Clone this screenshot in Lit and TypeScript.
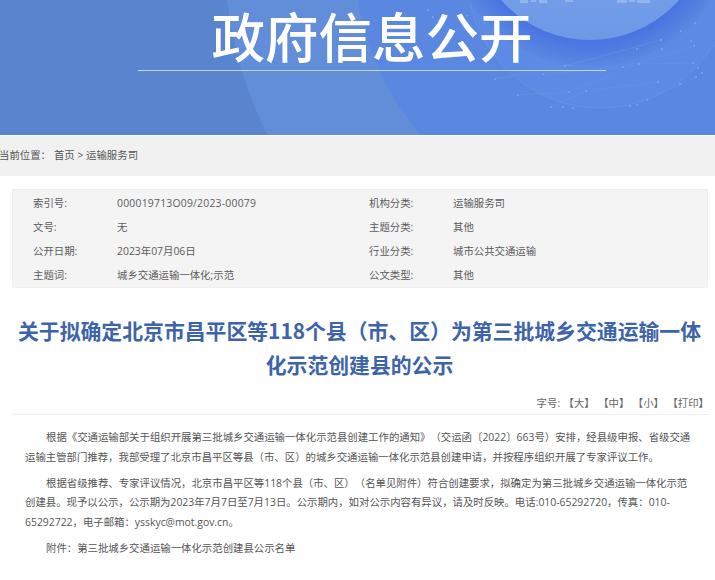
import { LitElement, html, css, svg } from "lit";
import { customElement } from "lit/decorators.js";

const rows: [string, string, string, string][] = [
  ["索引号:", "000019713O09/2023-00079", "机构分类:", "运输服务司"],
  ["文号:", "无", "主题分类:", "其他"],
  ["公开日期:", "2023年07月06日", "行业分类:", "城市公共交通运输"],
  ["主题词:", "城乡交通运输一体化;示范", "公文类型:", "其他"],
];

const dots: [number, number][] = [
  [695,23],[681,31],[661,40],[691,41],[694,46],[662,49],[637,49],[693,63],[698,68],[702,73],[696,77],
  [658,82],[680,84],[623,67],[639,64],[565,66],[543,74],[495,79],[569,92],[586,91],[518,95],[551,107],
  [563,107],[573,108],[630,106],[637,105],[647,100],[428,10],[433,17],[467,16],
];
const links: [number, number, number, number][] = [
  [495,79,565,66],[565,66,661,40],[543,74,623,67],[623,67,694,46],[569,92,639,64],[639,64,693,63],[586,91,658,82],[518,95,569,92],[551,107,586,91],[647,100,696,77],
];
const skyline: [number, number, number][] = [[520,8,3],[531,5,2],[539,8,3],[565,8,2],[617,10,3],[629,6,2],[637,13,3]];

@customElement("app-root")
export class AppRoot extends LitElement {
  static styles = css`
    :host { display: block; width: 715px; height: 580px; overflow: hidden; background: #fff;
      font-family: "Open Sans", "Noto Sans CJK SC", sans-serif; color: #555; text-spacing-trim: space-all; }
    .banner { position: relative; height: 135px; background: #5a84cd; display: flex; flex-direction: column; align-items: flex-start; }
    .deco { position: absolute; inset: 0; width: 100%; height: 100%; }
    .banner h1 { position: relative; margin: 6px 0 0 138px; height: 65px; width: 468px; box-sizing: border-box; border-bottom: 1px solid #c3d3f0;
      font: 500 53.5px/58px "Noto Sans CJK SC", sans-serif; color: #fff; text-align: center; white-space: nowrap; }
    .crumb { margin-top: 1px; height: 40px; background: #f1f1f1; font-size: 10.4px; line-height: 39px; color: #555; white-space: nowrap; text-indent: -1px; }
    .crumb span { margin-left: 3px; }
    .meta { margin: 13px 7px 0 12px; height: 99px; box-sizing: border-box; background: #f4f4f4; border: 1px solid #efefef; display: grid;
      grid-template-columns: 84px 252px 84px 1fr; grid-auto-rows: 24px; padding: 1px 0 0 20px; font-size: 10.4px; line-height: 24px; color: #5c5c5c; }
    .meta div:nth-child(2) { letter-spacing: 0.22px; }
    .title { margin: 25px 10px 0 14px; font: 700 20.85px/34px "Noto Sans CJK SC", sans-serif; color: #3d64a9; text-align: center; }
    .tools { margin: 13px 6px 0 12px; height: 20px; border-bottom: 1px solid #eee; text-align: right; font-size: 10.4px; line-height: 18px; color: #666; white-space: pre; word-spacing: 0.75px; }
    .body { margin: 13px 20px 0 25px; font-size: 10.4px; line-height: 19.5px; color: #555; }
    .body p { margin: 0 0 6.5px; text-indent: 21px; }
  `;

  render() {
    return html`
      <div class="banner">
        <svg class="deco" viewBox="0 0 715 135" aria-hidden="true">
          <defs>
            <radialGradient id="halo">
              <stop offset="0.82" stop-color="#4873e2"></stop>
              <stop offset="1" stop-color="#5a88e0"></stop>
            </radialGradient>
            <linearGradient id="moon" x1="0" y1="0" x2="0" y2="1">
              <stop offset="0.6" stop-color="#7ba4ea"></stop>
              <stop offset="1" stop-color="#6d98e6"></stop>
            </linearGradient>
          </defs>
          <circle cx="640" cy="-50" r="416" fill="#618dd9"></circle>
          <circle cx="620" cy="-40" r="265" fill="#5a88e0"></circle>
          <circle cx="600" cy="-25" r="133" fill="#5c8ae4"></circle>
          <circle cx="600" cy="-25" r="133" fill="none" stroke="#6b94e6" stroke-width="0.7"></circle>
          <circle cx="590" cy="-79" r="145" fill="url(#halo)"></circle>
          <circle cx="590" cy="-79" r="119" fill="url(#moon)"></circle>
          ${skyline.map(([x, w, h]) => svg`<rect x=${x} y="0" width=${w} height=${h} fill="#94b4ec"></rect>`)}
          ${links.map(([a, b, c, d]) => svg`<line x1=${a} y1=${b} x2=${c} y2=${d} stroke="#6b95e6" stroke-width="0.5"></line>`)}
          ${dots.map(([x, y]) => svg`<circle cx=${x} cy=${y} r="1.1" fill="#7fa2e8"></circle>`)}
        </svg>
        <h1>政府信息公开</h1>
      </div>
      <div class="crumb">当前位置：<span>首页 &gt; 运输服务司</span></div>
      <div class="meta">
        ${rows.map((r) => r.map((c) => html`<div>${c}</div>`))}
      </div>
      <div class="title">关于拟确定北京市昌平区等118个县（市、区）为第三批城乡交通运输一体化示范创建县的公示</div>
      <div class="tools">字号: 【大】 【中】 【小】 【打印】</div>
      <div class="body">
        <p>根据《交通运输部关于组织开展第三批城乡交通运输一体化示范县创建工作的通知》（交运函〔2022〕663号）安排，经县级申报、省级交通运输主管部门推荐，我部受理了北京市昌平区等县（市、区）的城乡交通运输一体化示范县创建申请，并按程序组织开展了专家评议工作。</p>
        <p>根据省级推荐、专家评议情况，北京市昌平区等118个县（市、区）（名单见附件）符合创建要求，拟确定为第三批城乡交通运输一体化示范创建县。现予以公示，公示期为2023年7月7日至7月13日。公示期内，如对公示内容有异议，请及时反映。电话:010-65292720，传真：010-65292722，电子邮箱：ysskyc@mot.gov.cn。</p>
        <p>附件：第三批城乡交通运输一体化示范创建县公示名单</p>
      </div>
    `;
  }
}
